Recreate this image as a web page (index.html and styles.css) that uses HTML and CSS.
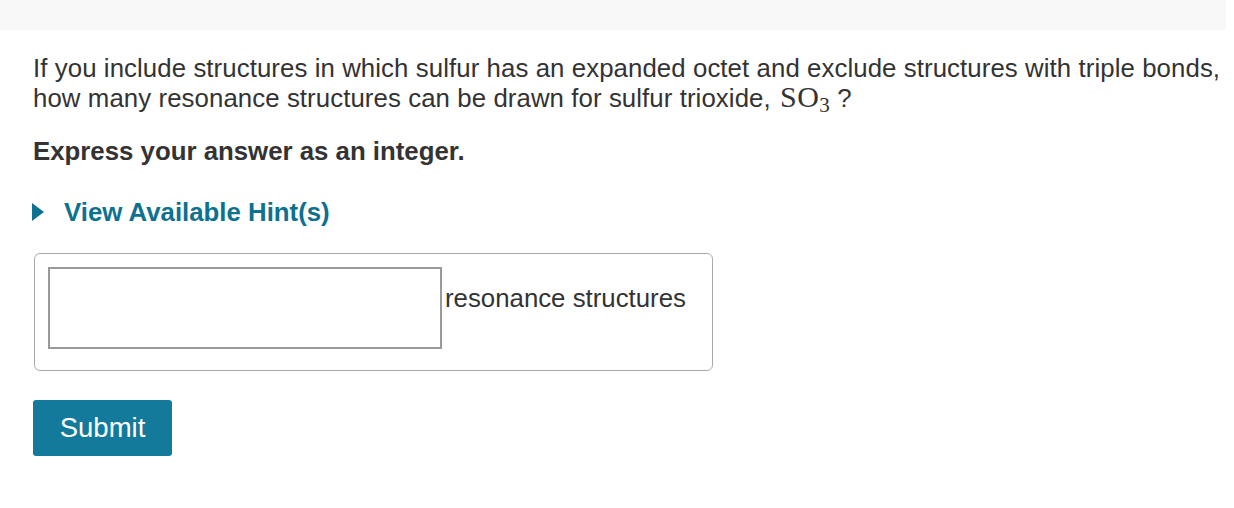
FILE: index.html
```html
<!DOCTYPE html>
<html>
<head>
<meta charset="utf-8">
<link rel="stylesheet" href="styles.css">
</head>
<body>
<div class="topbar"></div>
<main class="content">
  <p class="question">If you include structures in which sulfur has an expanded octet and exclude structures with triple bonds, how many resonance structures can be drawn for sulfur trioxide, <span class="math">SO</span><span class="math-sub">3</span> ?</p>
  <p class="instr">Express your answer as an integer.</p>
  <div class="hint">
    <svg class="tri" width="12" height="18" viewBox="0 0 12 18"><polygon points="0,0 12,9 0,18" fill="#0e7190"/></svg>
    <span>View Available Hint(s)</span>
  </div>
  <div class="answer-box">
    <input class="answer-input" type="text">
    <span class="unit">resonance structures</span>
  </div>
  <button class="submit">Submit</button>
</main>
</body>
</html>
```
FILE: styles.css
```css
html, body { margin: 0; padding: 0; background: #fff; }
body { font-family: "Liberation Sans", Arial, sans-serif; color: #333; }
.topbar { height: 30px; width: 1226px; background: #f8f8f8; }
.content { padding: 23px 0 0 33px; }
.question { margin: 0; font-size: 25.8px; line-height: 30px; width: 1195px; letter-spacing: 0.08px; }
.math { font-family: "Liberation Serif", "Times New Roman", serif; font-size: 30px; line-height: 0; letter-spacing: 0.5px; margin-left: 2px; }
.math-sub { font-family: "Liberation Serif", "Times New Roman", serif; font-size: 21px; line-height: 0; position: relative; top: 5px; }
.instr { margin: 23px 0 0; font-size: 25.8px; font-weight: bold; line-height: 30px; }
.hint { display: flex; align-items: center; gap: 20px; margin-top: 31px; color: #0e7190; font-weight: bold; font-size: 25.8px; line-height: 30px; }
.tri { margin-left: -1px; flex: none; }
.answer-box { margin-top: 26px; margin-left: 1px; width: 679px; height: 118px; border: 1px solid #aaa; border-radius: 6px; box-sizing: border-box; display: flex; align-items: flex-start; padding: 13px 0 0 13px; }
.answer-input { width: 394px; height: 82px; box-sizing: border-box; border: 2px solid #999; margin: 0; padding: 0; flex: none; }
.unit { font-size: 25.8px; color: #333; margin-left: 3px; margin-top: 16px; line-height: 30px; }
.submit { display: block; margin-top: 29px; width: 139px; height: 56px; background: #137a9b; color: #fff; border: none; border-radius: 3px; font-family: "Liberation Sans", Arial, sans-serif; font-size: 27.5px; padding: 0; }
```
